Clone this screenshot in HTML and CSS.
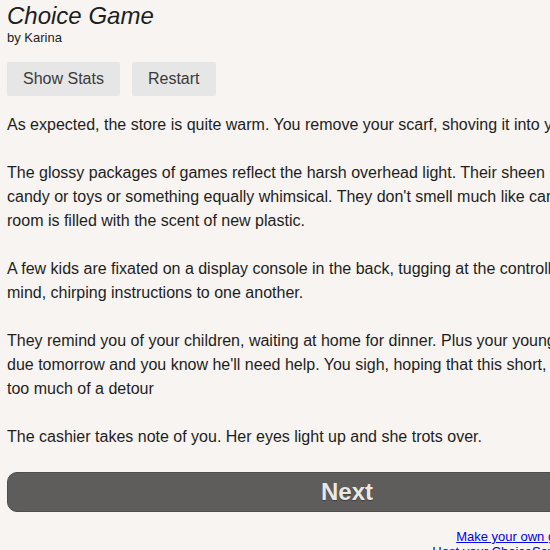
FILE: index.html
```html
<!DOCTYPE html>
<html lang="en">
<head>
  <meta charset="UTF-8" />
  <meta name="viewport" content="width=device-width, initial-scale=1.0"/>
  <title>Choice Game</title>
  <link rel="stylesheet" href="styles.css">
</head>
<body>
  <div class="container">
    <header class="title-block">
      <h1 class="game-title">Choice Game</h1>
      <div class="author">by Karina</div>
    </header>

    <div class="top-buttons">
      <button class="small-btn">Show Stats</button>
      <button class="small-btn">Restart</button>
    </div>

    <div class="story" id="text">
      <p>As expected, the store is quite warm. You remove your scarf, shoving it into your coat pocket.</p>
      <p>The glossy packages of games reflect the harsh overhead light. Their sheen reminds you of candy or toys or something equally whimsical. They don't smell much like candy, though; the room is filled with the scent of new plastic.</p>
      <p>A few kids are fixated on a display console in the back, tugging at the controllers with a shared mind, chirping instructions to one another.</p>
      <p>They remind you of your children, waiting at home for dinner. Plus your youngest has a project due tomorrow and you know he'll need help. You sigh, hoping that this short, quick stop won't be too much of a detour</p>
      <p>The cashier takes note of you. Her eyes light up and she trots over.</p>
    </div>

    <button class="next-btn">Next</button>

    <div class="links">
      <a href="#">Make your own games with ChoiceScript</a><br>
      <a href="#">Host your ChoiceScript games with us today!</a>
    </div>
  </div>
</body>
</html>
```

FILE: styles.css
```css
html, body {overflow-x: hidden;}
body {margin: 0; padding: 0; background-color: #f7f4f1; color: #1e1e1e; font-family: "Liberation Sans", Arial, Helvetica, sans-serif;}
.container {width: 680px; padding: 2px 7px 0 7px;}
.title-block {margin-bottom: 17px;}
.game-title {margin: 0; font-size: 24px; font-style: italic; font-weight: normal; line-height: 28px;}
.author {font-size: 13px; line-height: 15px;}
/* Stats / restart */
.top-buttons {display: flex; gap: 12px;}
.small-btn {font-family: inherit; font-size: 16px; line-height: 18px; padding: 8px 16px; background: #e6e6e6; color: #3a3a3a; border: none; border-radius: 2px; cursor: pointer;}
.story {margin-top: 17px; font-size: 16px; line-height: 24px;}
.story p {margin: 0 0 24px 0;}
.story p:last-child {margin-bottom: 0;}
/* Next */
.next-btn {display: block; width: 680px; height: 40px; margin-top: 23px; padding: 0; background: #5e5d5b; border: 1px solid #4f4e4c; border-radius: 10px; color: #ebe8e4; font-family: inherit; font-size: 24px; font-weight: bold; text-shadow: 0 1px 1px rgba(0,0,0,0.35); cursor: pointer;}
.links {margin-top: 17px; margin-right: -4px; text-align: right; font-size: 13px; line-height: 15px;}
.links a {color: #0000ee;}
```
